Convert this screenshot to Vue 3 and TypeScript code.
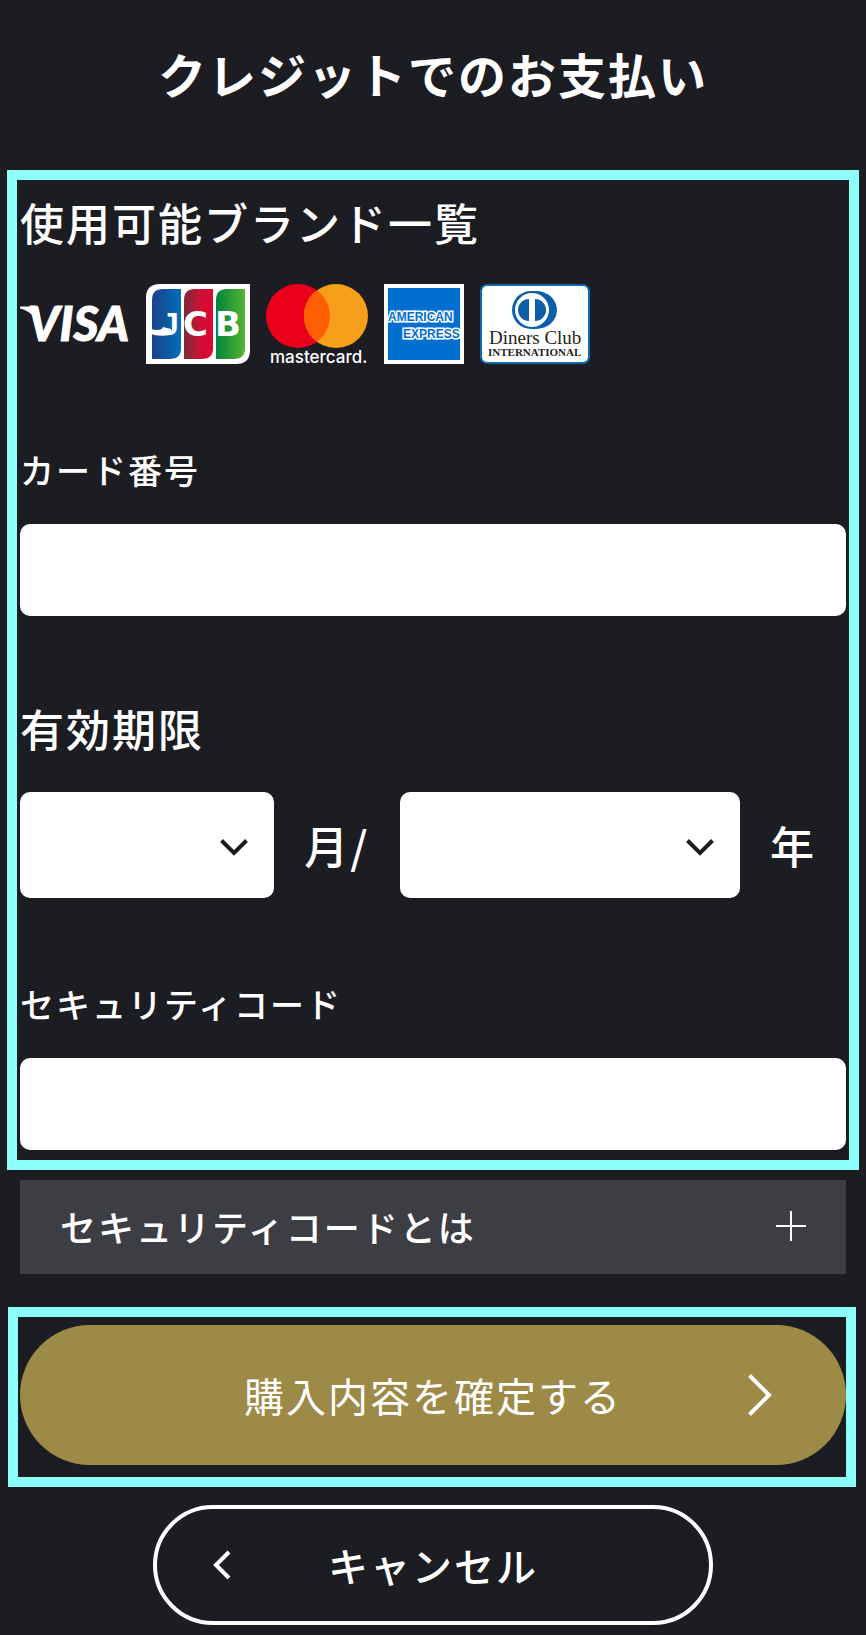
<script setup lang="ts">
import { ref } from 'vue'

const cardNumber = ref('')
const month = ref('')
const year = ref('')
const securityCode = ref('')
const helpOpen = ref(false)

const months: number[] = Array.from({ length: 12 }, (_, i) => i + 1)
const years: number[] = Array.from({ length: 10 }, (_, i) => 2024 + i)
</script>

<template>
  <main class="page">
    <h1 class="title">クレジットでのお支払い</h1>

    <form @submit.prevent>
      <div class="frame frame-fields">
        <section>
          <h2 class="heading">使用可能ブランド一覧</h2>
          <div class="brands">
            <svg width="110" height="80" viewBox="0 0 110 80" role="img" aria-label="VISA">
              <path d="M0 22.5 H14 Q18 23 19 27 L22 46 Q15 28 0 24.5 Z" fill="#fff" />
              <text x="8" y="57" class="visa">VISA</text>
            </svg>

            <svg width="104" height="80" viewBox="0 0 104 80" role="img" aria-label="JCB">
              <defs>
                <linearGradient id="jcb-blue">
                  <stop offset="0" stop-color="#1d3f8c" />
                  <stop offset="1" stop-color="#0070b8" />
                </linearGradient>
                <linearGradient id="jcb-red">
                  <stop offset="0" stop-color="#7b2d38" />
                  <stop offset="0.6" stop-color="#cf0f35" />
                  <stop offset="1" stop-color="#e0062f" />
                </linearGradient>
                <linearGradient id="jcb-green">
                  <stop offset="0" stop-color="#00843f" />
                  <stop offset="1" stop-color="#57b531" />
                </linearGradient>
              </defs>
              <path d="M14 0 H104 V66 Q104 80 90 80 H0 V14 Q0 0 14 0 Z" fill="#fff" />
              <path d="M17 5 H35 V64 Q35 75 24 75 H6 V16 Q6 5 17 5 Z" fill="url(#jcb-blue)" />
              <path d="M49 5 H67 V64 Q67 75 56 75 H38 V16 Q38 5 49 5 Z" fill="url(#jcb-red)" />
              <path d="M81 5 H99 V64 Q99 75 88 75 H70 V16 Q70 5 81 5 Z" fill="url(#jcb-green)" />
              <path d="M5 45 Q11 47 16 45 L17 43 L25 45 V51 Q12 53 5 50 Z" fill="#fff" />
              <text x="15" y="51" class="jcb-j">J</text>
              <text x="37" y="52" class="jcb">C</text>
              <text x="69" y="52" class="jcb">B</text>
            </svg>

            <svg width="102" height="80" viewBox="0 0 102 80" role="img" aria-label="mastercard">
              <circle cx="32" cy="32" r="32" fill="#eb001b" />
              <circle cx="70" cy="32" r="32" fill="#f79e1b" />
              <path d="M51 6.3 A32 32 0 0 1 51 57.7 A32 32 0 0 1 51 6.3 Z" fill="#ff5f00" />
              <text x="4" y="79" class="mastercard">mastercard.</text>
            </svg>

            <svg width="80" height="80" viewBox="0 0 80 80" role="img" aria-label="AMERICAN EXPRESS">
              <rect width="80" height="80" fill="#fff" />
              <rect x="4" y="4" width="72" height="72" fill="#016fd0" />
              <text x="4" y="37" class="amex">AMERICAN</text>
              <text x="19" y="54" class="amex">EXPRESS</text>
            </svg>

            <svg width="110" height="80" viewBox="0 0 110 80" role="img" aria-label="Diners Club INTERNATIONAL">
              <rect x="1" y="1" width="108" height="78" rx="6" fill="#fff" stroke="#0b69b0" stroke-width="2" />
              <path d="M51 7 H56 A21 19 0 0 1 56 45 H51 A19 19 0 0 1 51 7 Z" fill="#0b5fa8" />
              <circle cx="52" cy="26" r="17" fill="#fff" />
              <path d="M49 15 V37 A11 11 0 0 1 49 15 Z M55 15 A11 11 0 0 1 55 37 Z" fill="#0b5fa8" />
              <text x="9" y="60" class="diners">Diners Club</text>
              <text x="8" y="72" class="diners-sub">INTERNATIONAL</text>
            </svg>
          </div>
        </section>

        <section class="field">
          <label class="label" for="card-number">カード番号</label>
          <input id="card-number" v-model="cardNumber" class="input" type="text" inputmode="numeric" />
        </section>

        <section class="field">
          <h2 class="heading">有効期限</h2>
          <div class="expiry">
            <div class="picker">
              <select id="month" v-model="month" class="select">
                <option value=""></option>
                <option v-for="m in months" :key="m" :value="m">{{ m }}</option>
              </select>
              <svg class="chevron" width="28" height="18" viewBox="0 0 28 18" aria-hidden="true">
                <path d="M1.5 1.5 L14 14 L26.5 1.5" />
              </svg>
            </div>
            <label class="unit" for="month">月/</label>
            <div class="picker">
              <select id="year" v-model="year" class="select">
                <option value=""></option>
                <option v-for="y in years" :key="y" :value="y">{{ y }}</option>
              </select>
              <svg class="chevron" width="28" height="18" viewBox="0 0 28 18" aria-hidden="true">
                <path d="M1.5 1.5 L14 14 L26.5 1.5" />
              </svg>
            </div>
            <label class="unit" for="year">年</label>
          </div>
        </section>

        <section class="field">
          <label class="label" for="security-code">セキュリティコード</label>
          <input id="security-code" v-model="securityCode" class="input" type="text" inputmode="numeric" />
        </section>
      </div>

      <button class="help" type="button" :aria-expanded="helpOpen" @click="helpOpen = !helpOpen">
        <span>セキュリティコードとは</span>
        <svg width="30" height="30" viewBox="0 0 30 30" aria-hidden="true">
          <path d="M0 15 H30 M15 0 V30" stroke="#fff" stroke-width="2" />
        </svg>
      </button>

      <div class="frame frame-submit">
        <button class="submit" type="submit">
          <span>購入内容を確定する</span>
          <svg class="arrow-next" width="24" height="42" viewBox="0 0 24 42" aria-hidden="true">
            <path d="M1.5 1.5 L21 21 L1.5 40.5" />
          </svg>
        </button>
      </div>

      <button class="cancel" type="button">
        <span>キャンセル</span>
        <svg class="arrow-back" width="18" height="30" viewBox="0 0 18 30" aria-hidden="true">
          <path d="M16 2 L3 15 L16 28" />
        </svg>
      </button>
    </form>
  </main>
</template>

<style>
body {
  margin: 0;
  background: #1c1d22;
}
</style>

<style scoped>
.page {
  box-sizing: border-box;
  padding-bottom: 10px;
  background: #1c1d22;
  color: #fff;
  font-family: "Noto Sans CJK JP", sans-serif;
  font-weight: 500;
  letter-spacing: 2px;
}

.page button {
  font-family: inherit;
  letter-spacing: inherit;
  color: inherit;
  cursor: pointer;
}

.title {
  margin: 0;
  padding: 38px 0 62px;
  font-size: 48px;
  line-height: 70px;
  font-weight: 700;
  text-align: center;
}

.frame {
  border: 10px solid #8cfffb;
}

.frame-fields {
  margin: 0 7px;
  padding: 10px 3px;
}

.heading {
  margin: 0 0 30px;
  font-size: 44px;
  line-height: 64px;
  font-weight: 500;
}

.brands {
  display: flex;
  flex-wrap: wrap;
  gap: 16px;
  letter-spacing: 0;
}

.brands svg {
  overflow: visible;
}

.field {
  margin-top: 80px;
}

.field .heading {
  margin-bottom: 32px;
}

.label {
  display: block;
  margin-bottom: 28px;
  font-size: 34px;
  line-height: 52px;
}

.input,
.select {
  box-sizing: border-box;
  display: block;
  width: 100%;
  height: 92px;
  padding: 0 20px;
  border: 0;
  border-radius: 10px;
  background: #fff;
  color: #1c1d22;
  font-family: inherit;
  font-size: 34px;
}

.expiry {
  display: grid;
  grid-template-columns: 254fr auto 340fr auto;
  align-items: center;
  gap: 30px;
  padding-right: 30px;
}

.picker {
  display: grid;
  align-items: center;
}

.select {
  grid-area: 1 / 1;
  height: 106px;
  appearance: none;
}

.chevron {
  grid-area: 1 / 1;
  justify-self: end;
  margin: 6px 26px 0 0;
  pointer-events: none;
  fill: none;
  stroke: #1c1d22;
  stroke-width: 4;
}

.unit {
  font-size: 44px;
  line-height: 64px;
}

.help {
  display: flex;
  align-items: center;
  justify-content: space-between;
  width: calc(100% - 40px);
  height: 94px;
  margin: 10px 20px 33px;
  padding: 0 40px 2px;
  border: 0;
  background: #3d3e43;
  font-size: 36px;
  line-height: 52px;
  font-weight: 500;
}

.frame-submit {
  margin: 0 10px 18px 8px;
  padding: 8px 0 12px 2px;
}

.submit,
.cancel {
  display: grid;
  align-items: center;
  justify-items: center;
  font-size: 40px;
  line-height: 58px;
}

.submit > *,
.cancel > * {
  grid-area: 1 / 1;
}

.submit {
  width: 100%;
  height: 140px;
  padding: 0 74px;
  border: 0;
  border-radius: 70px;
  background: #9e8a47;
  font-weight: 400;
}

.cancel {
  width: 560px;
  max-width: 100%;
  height: 120px;
  margin: 0 auto;
  padding: 0 56px;
  border: 4px solid #fff;
  border-radius: 60px;
  background: transparent;
  font-weight: 500;
}

.arrow-next,
.arrow-back {
  fill: none;
  stroke: #fff;
  stroke-width: 4;
}

.arrow-next {
  justify-self: end;
}

.arrow-back {
  justify-self: start;
}

.visa {
  fill: #fff;
  stroke: #fff;
  stroke-width: 1;
  font: italic 900 48px Lato, sans-serif;
}

.jcb {
  fill: #fff;
  font: bold 34px "DejaVu Sans", sans-serif;
}

.jcb-j {
  fill: #fff;
  font: bold 32px "Liberation Sans", sans-serif;
}

.mastercard {
  fill: #fff;
  font: 500 17px Inter, sans-serif;
}

.amex {
  fill: #016fd0;
  stroke: #fff;
  stroke-width: 3;
  paint-order: stroke;
  font: bold 12px "Liberation Sans", sans-serif;
}

.diners {
  fill: #231f20;
  font: 19px "Liberation Serif", serif;
}

.diners-sub {
  fill: #231f20;
  font: bold 11px "Liberation Serif", serif;
}
</style>
